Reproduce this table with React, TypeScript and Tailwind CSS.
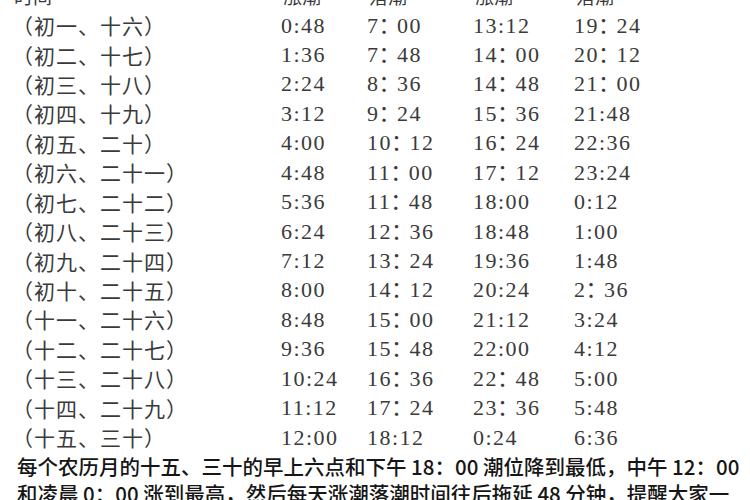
const rows: string[][] = [
  ['（初一、十六）', '0:48', '7：00', '13:12', '19：24'],
  ['（初二、十七）', '1:36', '7：48', '14：00', '20：12'],
  ['（初三、十八）', '2:24', '8：36', '14：48', '21：00'],
  ['（初四、十九）', '3:12', '9：24', '15：36', '21:48'],
  ['（初五、二十）', '4:00', '10：12', '16：24', '22:36'],
  ['（初六、二十一）', '4:48', '11：00', '17：12', '23:24'],
  ['（初七、二十二）', '5:36', '11：48', '18:00', '0:12'],
  ['（初八、二十三）', '6:24', '12：36', '18:48', '1:00'],
  ['（初九、二十四）', '7:12', '13：24', '19:36', '1:48'],
  ['（初十、二十五）', '8:00', '14：12', '20:24', '2：36'],
  ['（十一、二十六）', '8:48', '15：00', '21:12', '3:24'],
  ['（十二、二十七）', '9:36', '15：48', '22:00', '4:12'],
  ['（十三、二十八）', '10:24', '16：36', '22：48', '5:00'],
  ['（十四、二十九）', '11:12', '17：24', '23：36', '5:48'],
  ['（十五、三十）', '12:00', '18:12', '0:24', '6:36'],
];

const cjk = "font-['Noto_Sans_CJK_SC',sans-serif]";
const num = "font-['Liberation_Serif','Noto_Sans_CJK_SC',serif] text-[22px] tracking-[1.5px] leading-none";

// full-width colon set half-width (halt), with the gap after it like the SimSun original
function Time({ value }: { value: string }) {
  const parts = value.split('：');
  if (parts.length === 1) return <span className={num}>{value}</span>;
  return (
    <span className={num}>
      {parts[0]}
      <span className="[font-feature-settings:'halt'] ml-[-1px] mr-[6px]">：</span>
      {parts[1]}
    </span>
  );
}

export default function App() {
  return (
    <div className="w-[750px] h-[500px] overflow-hidden bg-white text-[#3a3a3a]">
      <div className="mt-[-18.5px] flex flex-col">
        <div className={`h-[29.43px] grid grid-cols-[269px_86px_106px_101px_1fr] items-center pl-[14px] text-[19px] ${cjk}`}>
          <span>时间</span>
          <span>涨潮</span>
          <span>落潮</span>
          <span>涨潮</span>
          <span>落潮</span>
        </div>
        {rows.map((r, i) => (
          <div
            key={i}
            className="h-[29.43px] grid grid-cols-[269px_86px_106px_101px_1fr] items-center pl-[12px] whitespace-nowrap"
          >
            <span className={`${cjk} text-[21px] tracking-[1px] leading-none`}>{r[0]}</span>
            <Time value={r[1]} />
            <Time value={r[2]} />
            <Time value={r[3]} />
            <Time value={r[4]} />
          </div>
        ))}
      </div>
      <p className={`mt-[0.8px] pl-[17px] pr-[6px] text-[20.5px] leading-[27px] font-medium text-[#161616] whitespace-nowrap ${cjk}`}>
        每个农历月的十五、三十的早上六点和下午 18：00 潮位降到最低，中午 12：00
        <br />
        和凌晨 0：00 涨到最高，然后每天涨潮落潮时间往后拖延 48 分钟，提醒大家一
        <br />
        定要注意涨潮落潮时间，注意安全。
      </p>
    </div>
  );
}
